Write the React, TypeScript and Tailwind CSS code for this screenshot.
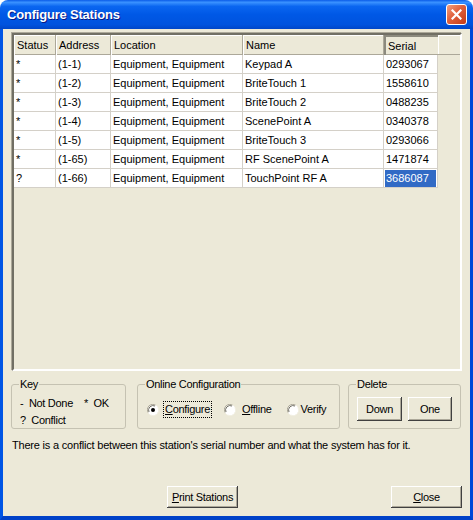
import { useState } from "react"

type Row = { status: string; address: string; location: string; name: string; serial: string }

const rows: Row[] = [
  { status: "*", address: "(1-1)", location: "Equipment, Equipment", name: "Keypad A", serial: "0293067" },
  { status: "*", address: "(1-2)", location: "Equipment, Equipment", name: "BriteTouch 1", serial: "1558610" },
  { status: "*", address: "(1-3)", location: "Equipment, Equipment", name: "BriteTouch 2", serial: "0488235" },
  { status: "*", address: "(1-4)", location: "Equipment, Equipment", name: "ScenePoint A", serial: "0340378" },
  { status: "*", address: "(1-5)", location: "Equipment, Equipment", name: "BriteTouch 3", serial: "0293066" },
  { status: "*", address: "(1-65)", location: "Equipment, Equipment", name: "RF ScenePoint A", serial: "1471874" },
  { status: "?", address: "(1-66)", location: "Equipment, Equipment", name: "TouchPoint RF A", serial: "3686087" },
]

const btn =
  "flex items-center justify-center bg-[#ece9d8] text-[11px] tracking-[-0.3px] text-black shadow-[inset_-1px_-1px_0_#404040,inset_1px_1px_0_#ffffff,inset_-2px_-2px_0_#aca899]"

const Radio = ({ checked }: { checked?: boolean }) => (
  <svg width="12" height="12" viewBox="0 0 12 12" className="shrink-0">
    <circle cx="6" cy="6" r="5.5" fill="#ffffff" />
    <path d="M1 8.5 A5.5 5.5 0 0 1 8.5 1" fill="none" stroke="#aca899" strokeWidth="1" />
    <path d="M2 8 A4.5 4.5 0 0 1 8 2" fill="none" stroke="#716f64" strokeWidth="1" />
    <path d="M3.5 11 A5.5 5.5 0 0 0 11 3.5" fill="none" stroke="#f1efe2" strokeWidth="1" />
    {checked && <circle cx="6" cy="6" r="2" fill="#000000" />}
  </svg>
)

const GroupBox = ({ title, className, children }: { title: string; className: string; children: React.ReactNode }) => (
  <fieldset className={`rounded-[3px] border border-[#c5c2b2] ${className}`}>
    <legend className="ml-[7px] px-[1px] text-[11px] leading-[13px] tracking-[-0.3px]">{title}</legend>
    {children}
  </fieldset>
)

export default function App() {
  const [mode, setMode] = useState("configure")
  const cols = "grid grid-cols-[42px_55px_132px_141px_54px]"

  return (
    <div className="flex h-[520px] w-[473px] flex-col overflow-hidden rounded-t-[8px] font-[family-name:'Liberation_Sans',Arial,sans-serif] text-[11px] text-black">
      {/* title bar */}
      <div className="flex h-[29px] shrink-0 items-center justify-between bg-[linear-gradient(180deg,#0a5ce8_0%,#3a92ff_8%,#0a66f0_22%,#0058e6_50%,#0053de_85%,#0046c8_100%)] pl-[7px] pr-[6px]">
        <span className="text-[13px] font-bold tracking-[-0.2px] text-white [text-shadow:1px_1px_0_#0a1883]">
          Configure Stations
        </span>
        <div className="flex h-[21px] w-[21px] items-center justify-center rounded-[3px] border border-white bg-[linear-gradient(135deg,#f0a080_0%,#e0603c_45%,#c23a18_100%)]">
          <svg width="11" height="11" viewBox="0 0 11 11">
            <path d="M1.5 1.5 L9.5 9.5 M9.5 1.5 L1.5 9.5" stroke="#ffffff" strokeWidth="2.2" strokeLinecap="square" />
          </svg>
        </div>
      </div>

      {/* client area */}
      <div className="flex flex-1 flex-col border-b-[4px] border-l-[3px] border-r-[3px] border-b-[#0041c8] border-l-[#0055e5] border-r-[#0048d8] bg-[#ece9d8] pl-[8px] pr-[8px] pt-[4px] pb-[4px]">
        {/* list view */}
        <div className="ml-[1px] flex h-[338px] flex-col border-2 border-b-white border-l-[#716f64] border-r-white border-t-[#716f64] shadow-[-1px_-1px_0_#aca899]">
          <div className="flex h-[20px] shrink-0 border-b border-[#aca899]">
            <div className={cols}>
              {["Status", "Address", "Location", "Name"].map((h) => (
                <div key={h} className="flex items-center border-r border-[#aca899] pl-[3px] shadow-[inset_1px_1px_0_#ffffff]">
                  {h}
                </div>
              ))}
              <div className="flex items-center border-l-2 border-t-2 border-[#8c8a7e] pl-[2px] pt-[1px]">Serial</div>
            </div>
            <div className="flex-1 shadow-[inset_1px_1px_0_#ffffff]" />
          </div>
          {rows.map((r, i) => (
            <div key={r.address} className={cols}>
              {[r.status, r.address, r.location, r.name].map((c, j) => (
                <div key={j} className="flex h-[19px] items-center border-b border-r border-[#d4d0c8] bg-white pl-[2px]">
                  {c}
                </div>
              ))}
              <div className="flex h-[19px] items-center border-b border-r border-[#d4d0c8] bg-white pl-[1px]">
                {i === rows.length - 1 ? (
                  <span className="flex h-[17px] w-[51px] items-center bg-[#316ac5] pl-[1px] text-white">{r.serial}</span>
                ) : (
                  <span className="pl-[1px]">{r.serial}</span>
                )}
              </div>
            </div>
          ))}
        </div>

        {/* group boxes */}
        <div className="mt-[7px] flex">
          <GroupBox title="Key" className="h-[51px] w-[115px]">
            <div className="mt-[4px] flex h-[17px] items-center pl-[8px] tracking-[-0.3px]">
              <span className="w-[64px]">-&nbsp; Not Done</span>
              <span>*&nbsp; OK</span>
            </div>
            <div className="flex h-[17px] items-center pl-[8px] tracking-[-0.3px]">?&nbsp; Conflict</div>
          </GroupBox>
          <GroupBox title="Online Configuration" className="ml-[11px] h-[51px] w-[203px]">
            <div className="mt-[10px] flex items-center pl-[9px] tracking-[-0.3px]">
              <button className="flex items-center" onClick={() => setMode("configure")}>
                <Radio checked={mode === "configure"} />
                <span className="ml-[4px] border border-dotted border-black px-[1px] leading-[15px]">
                  <u>C</u>onfigure
                </span>
              </button>
              <button className="ml-[12px] flex items-center" onClick={() => setMode("offline")}>
                <Radio checked={mode === "offline"} />
                <span className="ml-[6px] leading-[15px]">
                  <u>O</u>ffline
                </span>
              </button>
              <button className="ml-[15px] flex items-center" onClick={() => setMode("verify")}>
                <Radio checked={mode === "verify"} />
                <span className="ml-[2px] leading-[15px]">Verify</span>
              </button>
            </div>
          </GroupBox>
          <GroupBox title="Delete" className="ml-[8px] h-[51px] w-[113px]">
            <div className="mt-[6px] flex gap-[6px] pl-[8px]">
              <button className={`${btn} h-[24px] w-[45px]`}>Down</button>
              <button className={`${btn} h-[24px] w-[44px]`}>One</button>
            </div>
          </GroupBox>
        </div>

        <div className="ml-[1px] mt-[8px] tracking-[-0.2px]">
          There is a conflict between this station&apos;s serial number and what the system has for it.
        </div>

        {/* footer buttons */}
        <div className="mt-auto mb-[4px] flex">
          <button className={`${btn} ml-[156px] h-[22px] w-[71px]`}>
            <span>
              <u>P</u>rint Stations
            </span>
          </button>
          <button className={`${btn} ml-auto h-[22px] w-[71px]`}>
            <span>
              <u>C</u>lose
            </span>
          </button>
        </div>
      </div>
    </div>
  )
}
